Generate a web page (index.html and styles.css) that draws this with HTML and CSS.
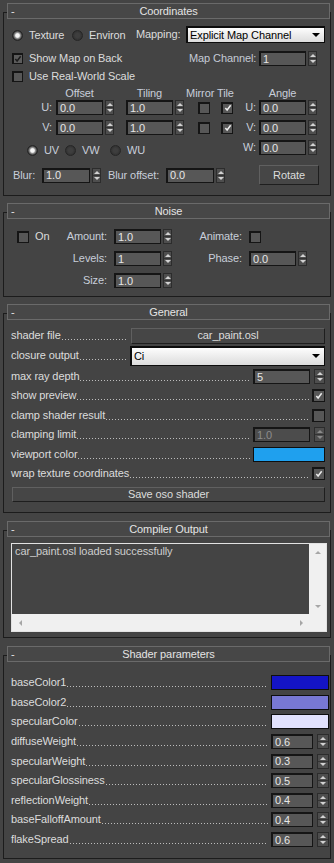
FILE: index.html
```html
<!DOCTYPE html>
<html lang="en">
<head>
    <meta charset="UTF-8">
    <meta name="viewport" content="width=device-width, initial-scale=1.0">
    <title>OSL Map</title>
    <link rel="stylesheet" href="styles.css">
</head>
<body>
<div class="panel">

    <!-- Coordinates -->
    <div class="rollout coords">
        <div class="rh"><span class="minus">-</span><span>Coordinates</span><span></span></div>

        <div class="row map-row">
            <span class="opt w-tex"><span class="rb on"></span>Texture</span>
            <span class="opt w-env"><span class="rb"></span>Environ</span>
            <span class="w-mapping">Mapping:</span>
            <span class="dd dd-map">Explicit Map Channel</span>
        </div>

        <div class="row back-row">
            <span class="opt w-back"><span class="cb grey"><svg viewBox="0 0 9 9"><path d="M1.5 4.5l2 2.2 4-5.2"/></svg></span>Show Map on Back</span>
            <span class="lbl-r w-chan">Map Channel:</span>
            <span class="num"><span class="field">1</span><span class="spin"></span></span>
        </div>

        <div class="row world-row">
            <span class="opt"><span class="cb"></span>Use Real-World Scale</span>
        </div>

        <div class="row head-row">
            <span class="h-offset">Offset</span>
            <span class="h-tiling">Tiling</span>
            <span class="h-mirror">Mirror Tile</span>
            <span class="h-angle">Angle</span>
        </div>

        <div class="row uvw-row">
            <span class="axis">U:</span>
            <span class="num"><span class="field">0.0</span><span class="spin"></span></span>
            <span class="num tiling"><span class="field">1.0</span><span class="spin"></span></span>
            <span class="cb mirror"></span>
            <span class="cb tile"><svg viewBox="0 0 9 9"><path d="M1.5 4.5l2 2.2 4-5.2"/></svg></span>
            <span class="axis2">U:</span>
            <span class="num"><span class="field">0.0</span><span class="spin"></span></span>
        </div>

        <div class="row uvw-row">
            <span class="axis">V:</span>
            <span class="num"><span class="field">0.0</span><span class="spin"></span></span>
            <span class="num tiling"><span class="field">1.0</span><span class="spin"></span></span>
            <span class="cb mirror"></span>
            <span class="cb tile"><svg viewBox="0 0 9 9"><path d="M1.5 4.5l2 2.2 4-5.2"/></svg></span>
            <span class="axis2">V:</span>
            <span class="num"><span class="field">0.0</span><span class="spin"></span></span>
        </div>

        <div class="row uvw-row">
            <span class="radios">
                <span class="opt w-uv"><span class="rb on"></span>UV</span>
                <span class="opt w-vw"><span class="rb"></span>VW</span>
                <span class="opt"><span class="rb"></span>WU</span>
            </span>
            <span class="axis2">W:</span>
            <span class="num"><span class="field">0.0</span><span class="spin"></span></span>
        </div>

        <div class="row blur-row">
            <span class="w-blur">Blur:</span>
            <span class="num wide"><span class="field">1.0</span><span class="spin"></span></span>
            <span class="w-bluroff">Blur offset:</span>
            <span class="num wide"><span class="field">0.0</span><span class="spin"></span></span>
            <span class="btn rotate">Rotate</span>
        </div>
    </div>

    <!-- Noise -->
    <div class="rollout noise">
        <div class="rh"><span class="minus">-</span><span>Noise</span><span></span></div>
        <div class="noise-grid">
            <span class="opt"><span class="cb"></span>On</span>
            <span class="lbl-r">Amount:</span>
            <span class="num"><span class="field">1.0</span><span class="spin"></span></span>
            <span class="lbl-r">Animate:</span>
            <span><span class="cb"></span></span>

            <span></span>
            <span class="lbl-r">Levels:</span>
            <span class="num"><span class="field">1</span><span class="spin"></span></span>
            <span class="lbl-r">Phase:</span>
            <span class="num"><span class="field">0.0</span><span class="spin"></span></span>

            <span></span>
            <span class="lbl-r">Size:</span>
            <span class="num"><span class="field">1.0</span><span class="spin"></span></span>
        </div>
    </div>

    <!-- General -->
    <div class="rollout general">
        <div class="rh"><span class="minus">-</span><span>General</span><span></span></div>
        <div class="prow h-file"><span>shader file</span><span class="lead"></span><span class="btn file">car_paint.osl</span></div>
        <div class="prow h-closure"><span>closure output</span><span class="lead"></span><span class="dd dd-closure">Ci</span></div>
        <div class="prow h-ray"><span>max ray depth</span><span class="lead"></span><span class="num ray"><span class="field">5</span><span class="spin"></span></span></div>
        <div class="prow"><span>show preview</span><span class="lead"></span><span class="cb end"><svg viewBox="0 0 9 9"><path d="M1.5 4.5l2 2.2 4-5.2"/></svg></span></div>
        <div class="prow"><span>clamp shader result</span><span class="lead"></span><span class="cb end"></span></div>
        <div class="prow"><span>clamping limit</span><span class="lead"></span><span class="num ray off"><span class="field">1.0</span><span class="spin"></span></span></div>
        <div class="prow"><span>viewport color</span><span class="lead"></span><span class="swatch sky"></span></div>
        <div class="prow"><span>wrap texture coordinates</span><span class="lead"></span><span class="cb end"><svg viewBox="0 0 9 9"><path d="M1.5 4.5l2 2.2 4-5.2"/></svg></span></div>
        <div class="btn save">Save oso shader</div>
    </div>

    <!-- Compiler Output -->
    <div class="rollout compiler">
        <div class="rh"><span class="minus">-</span><span>Compiler Output</span><span></span></div>
        <div class="out">
            <div class="out-text">car_paint.osl loaded successfully</div>
            <div class="vscroll"><span class="ar up"></span><span class="ar down"></span></div>
            <div class="hscroll"><span class="ar left"></span><span class="ar right"></span></div>
            <div class="corner"></div>
        </div>
    </div>

    <!-- Shader parameters -->
    <div class="rollout params">
        <div class="rh"><span class="minus">-</span><span>Shader parameters</span><span></span></div>
        <div class="plist">
            <div class="prow"><span>baseColor1</span><span class="lead"></span><span class="swatch blue1"></span></div>
            <div class="prow"><span>baseColor2</span><span class="lead"></span><span class="swatch blue2"></span></div>
            <div class="prow"><span>specularColor</span><span class="lead"></span><span class="swatch blue3"></span></div>
            <div class="prow"><span>diffuseWeight</span><span class="lead"></span><span class="num pn"><span class="field">0.6</span><span class="spin"></span></span></div>
            <div class="prow"><span>specularWeight</span><span class="lead"></span><span class="num pn"><span class="field">0.3</span><span class="spin"></span></span></div>
            <div class="prow"><span>specularGlossiness</span><span class="lead"></span><span class="num pn"><span class="field">0.5</span><span class="spin"></span></span></div>
            <div class="prow"><span>reflectionWeight</span><span class="lead"></span><span class="num pn"><span class="field">0.4</span><span class="spin"></span></span></div>
            <div class="prow"><span>baseFalloffAmount</span><span class="lead"></span><span class="num pn"><span class="field">0.4</span><span class="spin"></span></span></div>
            <div class="prow"><span>flakeSpread</span><span class="lead"></span><span class="num pn"><span class="field">0.6</span><span class="spin"></span></span></div>
        </div>
    </div>

</div>
</body>
</html>
```

FILE: styles.css
```css
body {
    margin: 0;
    background: #444444;
    font-family: "Liberation Sans", Arial, sans-serif;
    font-size: 11px;
    line-height: 13px;
    letter-spacing: -0.1px;
    color: #dcdcdc;
}
.panel {
    width: 334px;
    padding-top: 12px;
}

/* rollouts */
.rollout {
    margin-left: 3px;
    width: 328px;
    box-sizing: border-box;
    border: 1px solid #1c1c1c;
}
.noise { margin-top: 16px; padding-bottom: 8px; }
.general { margin-top: 16px; padding-bottom: 10px; }
.compiler { margin-top: 17px; padding-bottom: 5px; }
.params { margin-top: 17px; padding-bottom: 9px; }
.coords { padding-bottom: 10px; }

.rh {
    display: grid;
    grid-template-columns: 1fr auto 1fr;
    align-items: center;
    height: 16px;
    box-sizing: border-box;
    margin: -10px 0 0 3px;
    border: 1px solid #6a6a6a;
    background: #474747;
    color: #e4e4e4;
}
.rh .minus { padding-left: 3px; }

/* controls */
.row {
    display: flex;
    align-items: center;
}
.opt {
    display: flex;
    align-items: center;
    white-space: nowrap;
}
.lbl-r {
    text-align: right;
    padding-right: 6px;
    white-space: nowrap;
}
.rb {
    width: 11px;
    height: 11px;
    box-sizing: border-box;
    margin-right: 6px;
    border-radius: 50%;
    border: 1px solid #262626;
    background: radial-gradient(circle, #3e3e3e 0 2px, #303030 5px);
}
.rb.on {
    background: radial-gradient(circle, #f6f6f6 0 1.8px, #9a9a9a 2.8px, #3a3a3a 4.5px);
}
.cb {
    display: flex;
    align-items: center;
    justify-content: center;
    width: 12px;
    height: 12px;
    box-sizing: border-box;
    margin-right: 6px;
    border: 1px solid #151515;
    border-top-width: 2px;
    border-left-width: 2px;
    background: #575757;
}
.cb svg {
    width: 8px;
    height: 8px;
}
.cb path {
    fill: none;
    stroke: #ececec;
    stroke-width: 1.7;
}
.cb.grey { background: #5c5c5c; }
.cb.grey path { stroke: #1c1c1c; }

.num {
    display: flex;
    align-items: center;
    gap: 2px;
}
.field {
    display: flex;
    align-items: center;
    width: 47px;
    height: 15px;
    box-sizing: border-box;
    padding-left: 2px;
    border: 1px solid #151515;
    border-top-width: 2px;
    border-left-width: 2px;
    background: #575757;
    color: #e6e6e6;
}
.spin {
    display: flex;
    flex-direction: column;
    align-items: center;
    justify-content: center;
    gap: 3px;
    width: 9px;
    height: 15px;
    box-sizing: border-box;
    border: 1px solid #2c2c2c;
    background: linear-gradient(#4e4e4e 6px, #333 6px, #333 7px, #4e4e4e 7px);
}
.spin::before {
    content: "";
    border-left: 3px solid transparent;
    border-right: 3px solid transparent;
    border-bottom: 3px solid #d2d2d2;
}
.spin::after {
    content: "";
    border-left: 3px solid transparent;
    border-right: 3px solid transparent;
    border-top: 3px solid #d2d2d2;
}
.dd {
    display: flex;
    align-items: center;
    justify-content: space-between;
    box-sizing: border-box;
    padding: 0 4px 0 2px;
    border: 1px solid #0c0c0c;
    border-top-width: 2px;
    border-left-width: 2px;
    background: linear-gradient(#fdfdfd, #dcdcdc);
    color: #000;
}
.dd::after {
    content: "";
    border-left: 4px solid transparent;
    border-right: 4px solid transparent;
    border-top: 4px solid #000;
}
.btn {
    display: flex;
    align-items: center;
    justify-content: center;
    box-sizing: border-box;
    border: 1px solid;
    border-color: #606060 #1e1e1e #1e1e1e #606060;
    background: #464646;
    color: #dcdcdc;
}
.swatch {
    height: 15px;
    box-sizing: border-box;
    border: 1px solid #0e0e0e;
}

/* coordinates rollout */
.map-row { margin-top: 7px; height: 17px; padding-left: 8px; }
.map-row .opt { padding-top: 2px; }
.w-tex { width: 60px; }
.w-env { width: 64px; }
.w-mapping { width: 50px; }
.dd-map { width: 139px; height: 17px; }

.back-row { margin-top: 8px; height: 15px; padding-left: 8px; }
.back-row .cb, .world-row .cb { width: 11px; height: 11px; }
.w-back { width: 177px; }
.w-chan { width: 70px; padding-right: 5px; box-sizing: border-box; color: #c4cad6; }

.world-row { margin-top: 4px; height: 12px; padding-left: 8px; }

.head-row { margin-top: 5px; height: 13px; color: #c8ceda; }
.head-row span { text-align: center; white-space: nowrap; }
.h-offset { width: 47px; margin-left: 52px; }
.h-tiling { width: 47px; margin-left: 23px; }
.h-mirror { width: 50px; margin-left: 12px; }
.h-angle { width: 47px; margin-left: 24px; }

.uvw-row { height: 15px; margin-top: 5px; }
.head-row + .uvw-row { margin-top: 0; }
.axis {
    width: 52px;
    box-sizing: border-box;
    padding-right: 4px;
    text-align: right;
    color: #c8ceda;
}
.axis2 {
    width: 26px;
    box-sizing: border-box;
    padding-right: 3px;
    text-align: right;
    color: #c8ceda;
}
.tiling { margin-left: 12px; }
.mirror { margin-left: 14px; margin-right: 0; }
.tile { margin-left: 11px; margin-right: 0; }
.radios {
    display: flex;
    width: 229px;
    box-sizing: border-box;
    padding-left: 23px;
    align-self: flex-end;
    margin-bottom: -2px;
    color: #c8ceda;
}
.w-uv { width: 38px; }
.w-vw { width: 45px; }

.blur-row { margin-top: 10px; height: 20px; padding-left: 9px; color: #c8ceda; }
.w-blur { width: 29px; }
.num.wide .field { width: 48px; }
.w-bluroff { width: 58px; margin-left: 7px; white-space: nowrap; }
.rotate { width: 60px; height: 20px; margin-left: 34px; }

/* noise rollout */
.noise-grid {
    display: grid;
    grid-template-columns: 43px 54px 58px 77px auto;
    grid-auto-rows: 15px;
    row-gap: 7px;
    align-items: center;
    margin-top: 10px;
    padding-left: 13px;
}
.noise-grid .lbl-r { padding-right: 7px; color: #c8ceda; }

/* property rows */
.prow {
    display: flex;
    align-items: center;
    height: 19.5px;
    padding: 0 5px 0 7px;
    white-space: nowrap;
}
.lead {
    flex: 1;
    height: 9px;
    margin: 0 3px 0 1px;
    background-image: linear-gradient(to right, #bdbdbd 1px, transparent 1px);
    background-size: 3px 1px;
    background-repeat: repeat-x;
    background-position: left bottom;
}
.general .h-file { margin-top: 7px; height: 17px; }
.general .h-closure { height: 23px; }
.general .h-ray { height: 19px; }
.file { width: 194px; height: 16px; }
.dd-closure { width: 195px; height: 20px; }
.num.ray { gap: 4px; }
.num.ray .field { width: 57px; }
.num.ray .spin { width: 11px; }
.num.off .field { background: #4c4c4c; color: #8c8c8c; }
.num.off .spin::before { border-bottom-color: #8a8a8a; }
.num.off .spin::after { border-top-color: #8a8a8a; }
.cb.end { width: 13px; height: 13px; margin-right: 0; }
.sky { width: 72px; background: #1fa0ee; }
.save { height: 15px; margin: 3.5px 5px 0 8px; }

/* compiler output */
.out {
    display: grid;
    grid-template-columns: 1fr 17px;
    grid-template-rows: 1fr 17px;
    width: 316px;
    height: 89px;
    box-sizing: border-box;
    margin: 6px 0 0 7px;
    border: 1px solid #e2e2e2;
}
.out-text {
    padding: 1px 3px;
    background: #444444;
    color: #cdcdcd;
}
.vscroll, .hscroll, .corner { background: #f0f0f0; }
.vscroll {
    display: flex;
    flex-direction: column;
    align-items: center;
    justify-content: space-between;
    padding: 7px 0 6px;
}
.hscroll {
    display: flex;
    align-items: center;
    justify-content: space-between;
    padding: 0 6px 0 7px;
}
.ar { width: 0; height: 0; }
.ar.up { border: 3px solid transparent; border-top: 0; border-bottom: 3px solid #a6a6a6; }
.ar.down { border: 3px solid transparent; border-bottom: 0; border-top: 3px solid #a6a6a6; }
.ar.left { border: 3px solid transparent; border-left: 0; border-right: 3px solid #a6a6a6; }
.ar.right { border: 3px solid transparent; border-right: 0; border-left: 3px solid #a6a6a6; }

/* shader parameters */
.plist { padding-top: 11px; }
.params .prow { height: 19.6px; padding-right: 1px; }
.blue1 { width: 58px; background: #1414c6; }
.blue2 { width: 58px; background: #7878d4; }
.blue3 { width: 58px; background: #e2e2fd; }
.num.pn { gap: 4px; }
.num.pn .field { width: 42px; }
.num.pn .spin { width: 12px; }
```
